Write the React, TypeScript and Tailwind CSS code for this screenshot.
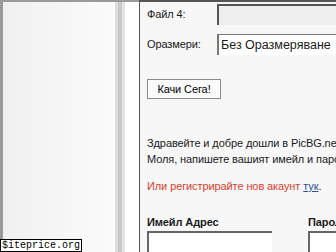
import React from "react";

const font = { fontFamily: '"Liberation Sans", Arial, sans-serif' };

const App: React.FC = () => {
  return (
    <div className="w-[336px] h-[252px] overflow-hidden flex bg-white relative" style={font}>
      {/* left sidebar */}
      <div className="w-[115px] h-full flex-none border-l-[3px] border-t-2 border-[#9a9a9a] bg-gradient-to-r from-[#f0f0f0] to-[#fbfbfb]" />
      {/* divider stripes */}
      <div className="h-full flex-none flex border-t-2 border-[#9a9a9a]">
        <div className="w-[3px] bg-[#dedede]" />
        <div className="w-[4px] bg-[#c9c9c9]" />
        <div className="w-[3px] bg-[#e3e3e3]" />
      </div>
      <div className="w-[14px] h-full flex-none bg-white border-t-2 border-[#9a9a9a]" />

      {/* content panel */}
      <div className="flex-1 h-full border-l border-t-2 border-[#555] bg-[#f7f7f7] text-[11px] tracking-[-0.1px] text-[#1a1a1a] pl-[7px] min-w-0">
        <div className="flex items-center h-[21px] mt-[2px]">
          <span className="w-[70px] flex-none">Файл 4:</span>
          <div className="w-[130px] h-[21px] flex-none border-t-2 border-l-2 border-[#555] bg-[#efefef]" />
        </div>
        <div className="flex items-center h-[21px] mt-[9px]">
          <span className="w-[70px] flex-none">Оразмери:</span>
          <div className="w-[130px] h-[21px] flex-none border-l-2 border-t border-[#777] bg-white flex items-center pl-[2px] text-[12.5px] tracking-normal whitespace-nowrap overflow-hidden">
            Без Оразмеряване
          </div>
        </div>
        <button className="mt-[24px] w-[74px] h-[20px] border border-[#8a8a8a] bg-[#fbfbfb] text-[11px] text-black">
          Качи Сега!
        </button>
        <div className="mt-[36px] leading-[16px] whitespace-nowrap">
          <div>Здравейте и добре дошли в PicBG.net!</div>
          <div>Моля, напишете вашият имейл и парола.</div>
        </div>
        <div className="mt-[11px] leading-[16px] whitespace-nowrap text-[#d9412d]">
          Или регистрирайте нов акаунт{" "}
          <span className="text-[#2d4fa0] underline">тук</span>
          <span className="text-[#222]">.</span>
        </div>
        <div className="mt-[20px] flex gap-[36px] whitespace-nowrap">
          <div className="flex flex-col">
            <span className="font-bold leading-[16px]">Имейл Адрес</span>
            <div className="mt-[1px] w-[125px] h-[22px] border-l-2 border-t-2 border-[#666] bg-white" />
          </div>
          <div className="flex flex-col">
            <span className="font-bold leading-[16px]">Парола</span>
            <div className="mt-[1px] w-[125px] h-[22px] border-l-2 border-t-2 border-[#666] bg-white" />
          </div>
        </div>
      </div>

      {/* watermark */}
      <div
        className="absolute left-0 bottom-0 h-[13px] px-[1px] bg-white border border-black text-[10px] leading-[11px] text-black"
        style={{ fontFamily: '"Liberation Mono", "Courier New", monospace' }}
      >
        $iteprice.org
      </div>
    </div>
  );
};

export default App;
